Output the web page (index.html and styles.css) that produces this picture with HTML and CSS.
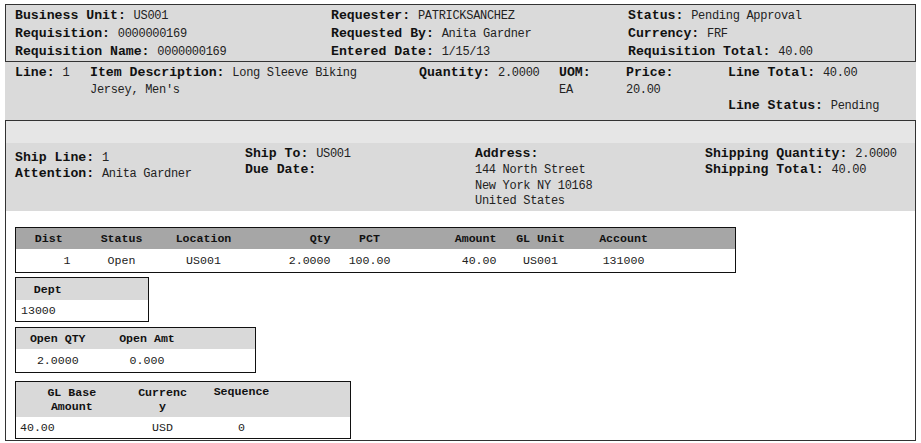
FILE: index.html
```html
<!DOCTYPE html>
<html>
<head>
<meta charset="utf-8">
<link rel="stylesheet" href="styles.css">
</head>
<body>
<div class="page">
  <div class="hdr">
    <div class="hcol">
      <div class="row"><b>Business Unit:</b> <span class="v">US001</span></div>
      <div class="row"><b>Requisition:</b> <span class="v">0000000169</span></div>
      <div class="row"><b>Requisition Name:</b> <span class="v">0000000169</span></div>
    </div>
    <div class="hcol">
      <div class="row"><b>Requester:</b> <span class="v">PATRICKSANCHEZ</span></div>
      <div class="row"><b>Requested By:</b> <span class="v">Anita Gardner</span></div>
      <div class="row"><b>Entered Date:</b> <span class="v">1/15/13</span></div>
    </div>
    <div class="hcol">
      <div class="row"><b>Status:</b> <span class="v">Pending Approval</span></div>
      <div class="row"><b>Currency:</b> <span class="v">FRF</span></div>
      <div class="row"><b>Requisition Total:</b> <span class="v">40.00</span></div>
    </div>
  </div>

  <div class="line-sec">
    <div class="lc c-line"><b>Line:</b> <span class="v">1</span></div>
    <div class="lc c-desc"><b>Item Description:</b> <span class="v">Long Sleeve Biking</span><br><span class="v">Jersey, Men's</span></div>
    <div class="lc c-qty"><b>Quantity:</b> <span class="v">2.0000</span></div>
    <div class="lc c-uom"><b>UOM:</b><br><span class="v">EA</span></div>
    <div class="lc c-price"><b>Price:</b><br><span class="v">20.00</span></div>
    <div class="lc c-total"><b>Line Total:</b> <span class="v">40.00</span><br>&nbsp;<br><b>Line Status:</b> <span class="v">Pending</span></div>
  </div>

  <div class="ship-box">
    <div class="band"></div>
    <div class="ship-info">
      <div class="sc sc1"><b>Ship Line:</b> <span class="v">1</span><br><b>Attention:</b> <span class="v">Anita Gardner</span></div>
      <div class="sc"><b>Ship To:</b> <span class="v">US001</span><br><b>Due Date:</b></div>
      <div class="sc"><b>Address:</b><br><span class="v">144 North Street</span><br><span class="v">New York NY 10168</span><br><span class="v">United States</span></div>
      <div class="sc sc-last"><b>Shipping Quantity:</b> <span class="v">2.0000</span><br><b>Shipping Total:</b> <span class="v">40.00</span></div>
    </div>

    <div class="grids">
      <table class="grid g1">
        <colgroup><col style="width:66px"><col style="width:80px"><col style="width:84px"><col style="width:94px"><col style="width:60px"><col style="width:105px"><col style="width:72px"><col style="width:94px"><col></colgroup>
        <thead>
          <tr><th>Dist</th><th>Status</th><th>Location</th><th class="r r9">Qty</th><th>PCT</th><th class="r r8">Amount</th><th>GL Unit</th><th>Account</th><th></th></tr>
        </thead>
        <tbody>
          <tr><td class="r r11">1</td><td>Open</td><td>US001</td><td class="r r9">2.0000</td><td>100.00</td><td class="r r8">40.00</td><td>US001</td><td>131000</td><td></td></tr>
        </tbody>
      </table>

      <table class="grid g2">
        <colgroup><col style="width:64px"><col></colgroup>
        <thead><tr><th>Dept</th><th></th></tr></thead>
        <tbody><tr><td class="l l5">13000</td><td></td></tr></tbody>
      </table>

      <table class="grid g3">
        <colgroup><col style="width:84px"><col style="width:95px"><col></colgroup>
        <thead><tr><th>Open QTY</th><th>Open Amt</th><th></th></tr></thead>
        <tbody><tr><td>2.0000</td><td>0.000</td><td></td></tr></tbody>
      </table>

      <table class="grid g4">
        <colgroup><col style="width:112px"><col style="width:70px"><col style="width:88px"><col></colgroup>
        <thead><tr><th>GL Base<br>Amount</th><th>Currenc<br>y</th><th class="top">Sequence</th><th></th></tr></thead>
        <tbody><tr><td class="l l4">40.00</td><td>USD</td><td>0</td><td></td></tr></tbody>
      </table>
    </div>
  </div>
</div>
</body>
</html>
```

FILE: styles.css
```css
html, body {
  margin: 0;
  padding: 0;
  background: #ffffff;
}

body {
  font-family: "Liberation Mono", "DejaVu Sans Mono", monospace;
  font-size: 13px;
  color: #000;
}

.page {
  padding: 4px 5px 0 5px;
}

b {
  font-weight: bold;
  font-size: 13.2px;
  line-height: 1;
  color: #111;
}

.v {
  font-size: 12px;
  letter-spacing: -0.3px;
  line-height: 1;
  color: #222;
}

/* Header */
.hdr {
  display: grid;
  grid-template-columns: 316px 297px 1fr;
  background: #dadada;
  border: 1px solid #333;
  padding: 2px 0 0 9px;
}

.hdr .row {
  height: 18px;
  line-height: 18px;
  white-space: nowrap;
}

/* Line section */
.line-sec {
  display: flex;
  background: #dadada;
  height: 58px;
  box-sizing: border-box;
  padding: 3px 0 0 10px;
  line-height: 16.5px;
}

.lc { white-space: nowrap; flex-shrink: 0; }
.c-line { width: 75px; }
.c-desc { width: 300px; margin-right: 29px; }
.c-qty { width: 140px; }
.c-uom { width: 67px; }
.c-price { width: 102px; }
.c-total { flex: 1; }

/* Ship box */
.ship-box {
  border: 1px solid #333;
}

.band {
  height: 22px;
  background: #e6e6e6;
}

.ship-info {
  display: flex;
  background: #dadada;
  height: 68px;
  box-sizing: border-box;
  padding: 3px 0 0 9px;
  line-height: 15.8px;
}

.sc {
  width: 230px;
  flex-shrink: 0;
  white-space: nowrap;
}

.sc-last { width: auto; flex: 1; }

.sc1 { padding-top: 4px; }

/* Grids */
.grids {
  padding: 16px 0 1px 9px;
  display: flex;
  flex-direction: column;
  align-items: flex-start;
}

.grid {
  border-collapse: collapse;
  border: 1px solid #111;
  table-layout: fixed;
  font-size: 11.6px;
}

.grid th {
  font-weight: bold;
  font-size: 11.6px;
  color: #111;
  text-align: center;
  padding: 0;
  background: #d9d9d9;
}

.grid td {
  color: #222;
  text-align: center;
  padding: 0;
  background: #fff;
}

.grid .r { text-align: right; }
.grid .l { text-align: left; }
.grid .r11 { padding-right: 11px; }
.grid .r9 { padding-right: 9px; }
.grid .r8 { padding-right: 8px; }
.grid .l5 { padding-left: 5px; }
.grid .l4 { padding-left: 4px; }

.g1 { width: 721px; }
.g1 th { background: #a6a6a6; height: 21px; }
.g1 td { height: 23px; }

.g2 { width: 134px; margin-top: 4px; }
.g2 th { height: 22px; }
.g2 td { height: 21px; }

.g3 { width: 241px; margin-top: 5px; }
.g3 th { height: 21px; }
.g3 td { height: 23px; }

.g4 { width: 336px; margin-top: 8px; }
.g4 th { height: 32px; line-height: 14px; }
.g4 th.top { vertical-align: top; padding-top: 3px; }
.g4 td { height: 21px; }
```
